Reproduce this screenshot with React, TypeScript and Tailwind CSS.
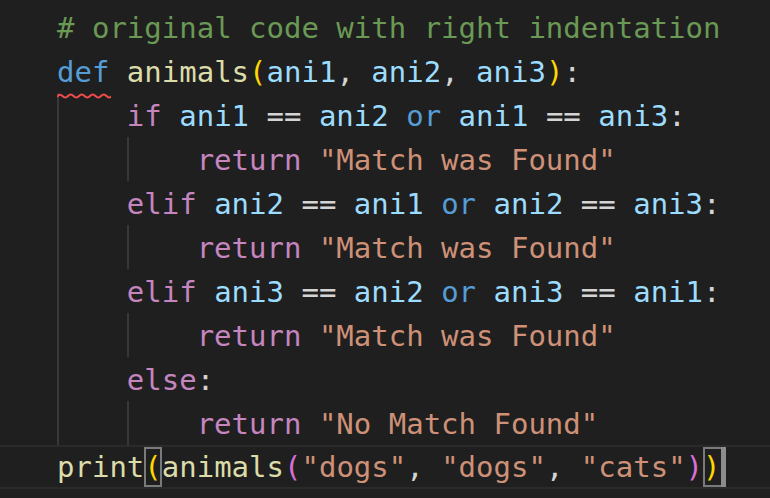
import React from 'react'

type Tok = [string, string]

const C = {
  comment: 'text-[#6a9955]',
  kw: 'text-[#569cd6]',
  ctrl: 'text-[#c586c0]',
  fn: 'text-[#dcdcaa]',
  param: 'text-[#9cdcfe]',
  punct: 'text-[#d4d4d4]',
  str: 'text-[#ce9178]',
  br1: 'text-[#ffd700]',
  br2: 'text-[#da70d6]',
}

const lines: { indent: number; toks: Tok[] }[] = [
  { indent: 0, toks: [['# original code with right indentation', C.comment]] },
  {
    indent: 0,
    toks: [
      ['def', 'def'],
      [' ', C.punct],
      ['animals', C.fn],
      ['(', C.br1],
      ['ani1', C.param],
      [', ', C.punct],
      ['ani2', C.param],
      [', ', C.punct],
      ['ani3', C.param],
      [')', C.br1],
      [':', C.punct],
    ],
  },
  {
    indent: 1,
    toks: [
      ['if', C.ctrl],
      [' ', C.punct],
      ['ani1', C.param],
      [' == ', C.punct],
      ['ani2', C.param],
      [' or ', C.kw],
      ['ani1', C.param],
      [' == ', C.punct],
      ['ani3', C.param],
      [':', C.punct],
    ],
  },
  { indent: 2, toks: [['return', C.ctrl], [' ', C.punct], ['"Match was Found"', C.str]] },
  {
    indent: 1,
    toks: [
      ['elif', C.ctrl],
      [' ', C.punct],
      ['ani2', C.param],
      [' == ', C.punct],
      ['ani1', C.param],
      [' or ', C.kw],
      ['ani2', C.param],
      [' == ', C.punct],
      ['ani3', C.param],
      [':', C.punct],
    ],
  },
  { indent: 2, toks: [['return', C.ctrl], [' ', C.punct], ['"Match was Found"', C.str]] },
  {
    indent: 1,
    toks: [
      ['elif', C.ctrl],
      [' ', C.punct],
      ['ani3', C.param],
      [' == ', C.punct],
      ['ani2', C.param],
      [' or ', C.kw],
      ['ani3', C.param],
      [' == ', C.punct],
      ['ani1', C.param],
      [':', C.punct],
    ],
  },
  { indent: 2, toks: [['return', C.ctrl], [' ', C.punct], ['"Match was Found"', C.str]] },
  { indent: 1, toks: [['else', C.ctrl], [':', C.punct]] },
  { indent: 2, toks: [['return', C.ctrl], [' ', C.punct], ['"No Match Found"', C.str]] },
]

// red error squiggle under "def"
function Squiggle() {
  let d = 'M0 4'
  for (let x = 0; x < 56; x += 11) {
    d += ` Q${x + 2.75} 0 ${x + 5.5} 3 T${x + 11} 3`
  }
  return (
    <svg className="absolute left-0 top-[38px]" width="54" height="7" viewBox="0 0 54 7">
      <path d={d} fill="none" stroke="#f14c4c" strokeWidth="2" />
    </svg>
  )
}

function Indents({ n }: { n: number }) {
  return (
    <>
      {Array.from({ length: n }).map((_, i) => (
        <span key={i} className="w-[4ch] shrink-0 self-stretch border-l-2 border-[#383838]" />
      ))}
    </>
  )
}

export default function App() {
  return (
    <div className="w-[770px] h-[498px] overflow-hidden bg-[#1f1f1f] pt-[5px] text-[29px] whitespace-pre font-['DejaVu_Sans_Mono',monospace]">
      {lines.map((line, i) => (
        <div key={i} className="flex h-[44px] pl-[57px] leading-[46px]">
          <Indents n={line.indent} />
          <span className="whitespace-pre">
            {line.toks.map(([t, c], j) =>
              c === 'def' ? (
                <span key={j} className="relative text-[#569cd6]">
                  {t}
                  <Squiggle />
                </span>
              ) : (
                <span key={j} className={c}>
                  {t}
                </span>
              )
            )}
          </span>
        </div>
      ))}
      <div className="flex h-[44px] border-y-2 border-[#2a2a2a] pl-[57px] leading-[40px]">
        <span className="text-[#dcdcaa]">print</span>
        <span className="inline-block text-[#ffd700] shadow-[inset_0_0_0_2px_#7a7a7a]">(</span>
        <span className="text-[#dcdcaa]">animals</span>
        <span className="text-[#da70d6]">(</span>
        <span className="text-[#ce9178]">"dogs"</span>
        <span className="text-[#d4d4d4]">, </span>
        <span className="text-[#ce9178]">"dogs"</span>
        <span className="text-[#d4d4d4]">, </span>
        <span className="text-[#ce9178]">"cats"</span>
        <span className="text-[#da70d6]">)</span>
        <span className="inline-flex shadow-[inset_0_0_0_2px_#7a7a7a]">
          <span className="text-[#ffd700]">)</span>
          <span className="w-[5px] bg-[#8c8c8c]" />
        </span>
      </div>
    </div>
  )
}
